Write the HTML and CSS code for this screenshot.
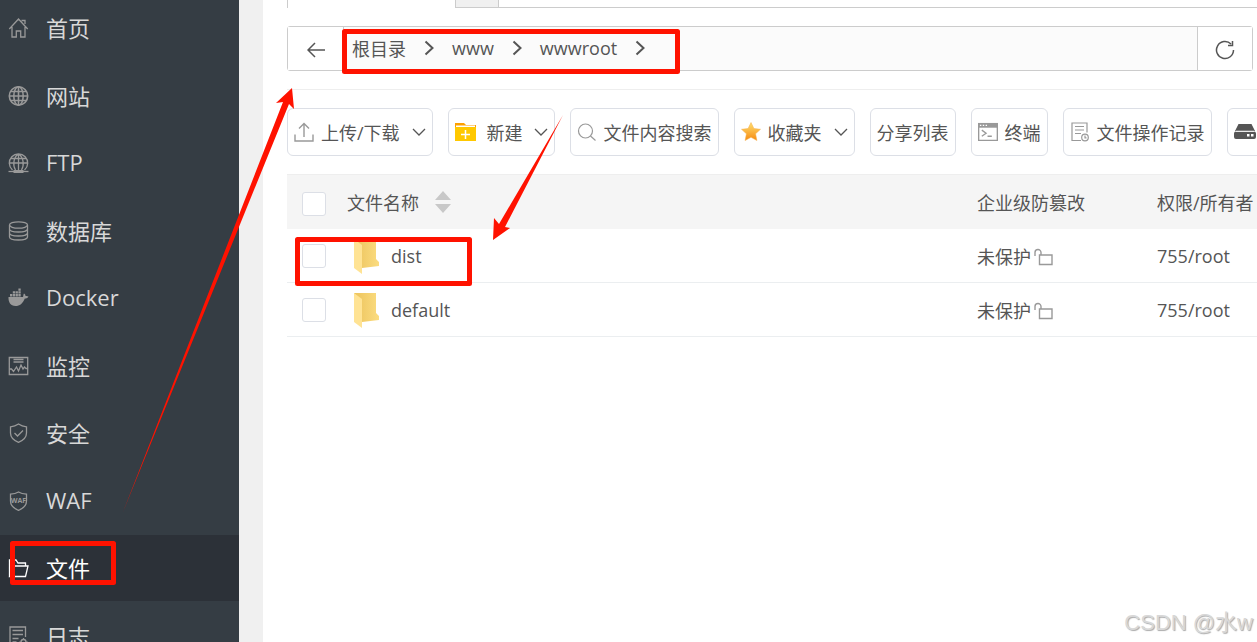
FILE: index.html
```html
<!DOCTYPE html>
<html lang="zh-CN">
  <head>
    <meta charset="utf-8">
    <title>文件</title>
    <link rel="stylesheet" href="styles.css">
  </head>
  <body>
    <div class="layout">
      <nav class="sidebar">
        <ul class="menu">
          <li><a href="#">
            <svg class="icon" viewBox="0 0 20 20"><path d="M.8 11 10 1l9.200 10M3.500 9v10h4.300v-6h4.400v6h4.300V9M13 2.500h3.500V6"/></svg>
            首页</a></li>
          <li><a href="#">
            <svg class="icon bold" viewBox="0 0 20 20"><circle cx="10" cy="10" r="9.200"/><ellipse cx="10" cy="10" rx="4.700" ry="9.200"/><path d="M10 1v18M1 10h18M2 5.500h16M2 14.500h16"/></svg>
            网站</a></li>
          <li><a href="#">
            <svg class="icon" viewBox="0 0 20 20"><path d="M4 17A9.200 9.200 0 1 1 16 17M7 17C4 12 5 4 10 1c5 3 6 11 3 16M10 1v16M1 10h18M2.500 5.500h15"/><path d="M0 18.500h20"/><path d="M5 18.500h10" stroke-width="3"/></svg>
            FTP</a></li>
          <li><a href="#">
            <svg class="icon" viewBox="0 0 20 20"><ellipse cx="10" cy="4" rx="9" ry="3.200"/><path d="M1 4v12c0 4 18 4 18 0V4M1 8c0 4 18 4 18 0M1 12c0 4 18 4 18 0"/></svg>
            数据库</a></li>
          <li><a href="#">
            <svg class="icon solid" viewBox="0 0 20 20"><path d="M0 9h14.500c.5-1 .2-2.500 1-3.500 1 .5 1.500 1.500 1.500 2.500 1-.2 2-.1 3 .5-.7 1.500-2 2-3.700 2-2 5-5 7.500-9.300 7.500C2 18-.3 14 0 9z"/><path d="M1.500 6h2.300v2.500H1.500zM4.300 6h2.300v2.500H4.300zM7.100 6h2.300v2.500H7.100zM9.900 6h2.300v2.500H9.900zM4.300 3.200h2.300v2.300H4.300zM7.100 3.200h2.300v2.300H7.100zM9.900 3.200h2.300v2.300H9.900zM9.900.4h2.300v2.300H9.900z"/></svg>
            Docker</a></li>
          <li><a href="#">
            <svg class="icon" viewBox="0 0 20 20"><path d="M.8 1.500h18.400v17H.8zM5 3.500h10M5 6h10M1 13h2l2 2.500L8 11l2 4 2.500-6 2 4 1.500-2 1.500 1.500H19"/></svg>
            监控</a></li>
          <li><a href="#">
            <svg class="icon" viewBox="0 0 20 20"><path d="M10 1c2.500 1.700 5 2.500 8 2.800V10c0 4.500-3.500 7.500-8 9.300C5.500 17.500 2 14.500 2 10V3.800C5 3.500 7.500 2.700 10 1zM6 10l3 3 5.500-5.500"/></svg>
            安全</a></li>
          <li><a href="#">
            <svg class="icon" viewBox="0 0 20 20"><path d="M10 1c2.500 1.500 5 2 8 2.200V10c0 4.500-3.500 7.500-8 9.300C5.500 17.500 2 14.500 2 10V3.200C5 3 7.500 2.500 10 1z"/><text class="waf" x="10" y="12" text-anchor="middle">WAF</text></svg>
            WAF</a></li>
          <li class="active"><a href="#">
            <svg class="icon" viewBox="0 0 20 20"><path d="M1 18.500V2h6.500l2 3H17v3M1 18.500 4.500 8h15l-2.500 10.500z"/></svg>
            文件</a></li>
          <li><a href="#">
            <svg class="icon" viewBox="0 0 20 20"><path d="M11 19H1.500V1H17v10M4 4.500h10.500M4 8.500h10.500M4 12.500h6M4 16h4"/><circle cx="15" cy="16" r="2.500"/><path d="M15 12v1M15 19v1M11 16h1M18 16h1"/></svg>
            日志</a></li>
        </ul>
      </nav>

      <main class="main">
        <div class="tabs">
          <div class="tab-current"></div>
          <div class="tab-add"></div>
        </div>

        <div class="address">
          <button class="back" type="button" aria-label="后退">
            <svg width="18" height="16" viewBox="0 0 18 16"><path d="M8 1 1 8l7 7M1 8h17"/></svg>
          </button>
          <div class="crumbs">
            <a href="#">根目录</a>
            <svg class="sep" viewBox="0 0 10 16"><path d="m1.500 1.500 7 6.500-7 6.500"/></svg>
            <a href="#">www</a>
            <svg class="sep" viewBox="0 0 10 16"><path d="m1.500 1.500 7 6.500-7 6.500"/></svg>
            <a href="#">wwwroot</a>
            <svg class="sep" viewBox="0 0 10 16"><path d="m1.500 1.500 7 6.500-7 6.500"/></svg>
          </div>
          <button class="refresh" type="button" aria-label="刷新">
            <svg width="20" height="20" viewBox="0 0 20 20"><path d="M18.500 10A8.500 8.500 0 1 1 16 4M17.500 1v4.500H13"/></svg>
          </button>
        </div>

        <div class="toolbar">
          <button class="btn btn-menu" type="button">
            <svg class="tool" viewBox="0 0 20 20"><path d="M1 12.500V19h18v-6.500M10 15V1.500M5 6.500l5-5 5 5"/></svg>
            上传/下载
            <svg class="caret" viewBox="0 0 14 8"><path d="m1 1 6 6 6-6"/></svg>
          </button>
          <button class="btn btn-new" type="button">
            <svg width="21" height="20" viewBox="0 0 21 20"><path fill="#fda000" d="M0 1h9l2 2h10v3H0z"/><path fill="#ffc800" d="M0 5h21v14H0z"/><path stroke="#fff" stroke-width="1.500" d="M1 4.200h19M10.500 8v9M6 12.500h9"/></svg>
            新建
            <svg class="caret" viewBox="0 0 14 8"><path d="m1 1 6 6 6-6"/></svg>
          </button>
          <button class="btn" type="button">
            <svg class="tool thin" viewBox="0 0 20 20"><circle cx="8.500" cy="9" r="7"/><path d="m13.500 14 5 4.500"/></svg>
            文件内容搜索
          </button>
          <button class="btn btn-menu" type="button">
            <svg width="20" height="20" viewBox="0 0 20 20">
              <defs><linearGradient id="star" x2="0" y2="1"><stop offset="0" stop-color="#ffdf70"/><stop offset="1" stop-color="#f68a10"/></linearGradient></defs>
              <path fill="url(#star)" stroke="#f5b04c" stroke-width=".5" stroke-linejoin="round" d="m10 .5 2.900 6 6.600.8-4.900 4.500 1.300 6.700-5.900-3.200-5.900 3.200 1.300-6.700L.5 7.300l6.600-.8z"/>
            </svg>
            收藏夹
            <svg class="caret" viewBox="0 0 14 8"><path d="m1 1 6 6 6-6"/></svg>
          </button>
          <button class="btn" type="button">分享列表</button>
          <button class="btn" type="button">
            <svg class="terminal" viewBox="0 0 21 19"><path d="M.7.7h19.600v17.600H.7zM4 7.500l4.500 3.300L4 14M10 14h4.500"/><path fill="#999" stroke="none" d="M0 0h21v5H0z"/><path stroke="#fff" d="M2 2.500h1.500M5 2.500h1.500M8 2.500h1.500"/></svg>
            终端
          </button>
          <button class="btn" type="button">
            <svg class="tool thin" viewBox="0 0 20 20"><path d="M11 18.500H2V1h15v9.500M5 4.500h9M5 8h9M5 11.500h6"/><circle cx="15" cy="15.500" r="3.300"/><path d="M15 13.500v2.300h1.500"/></svg>
            文件操作记录
          </button>
          <button class="btn btn-disk" type="button" aria-label="磁盘">
            <svg width="22" height="16" viewBox="0 0 22 16"><path fill="#555" d="M4.500 0h13L21 7H1zM2 7.500h18a2 2 0 0 1 2 2V13a2 2 0 0 1-2 2H2a2 2 0 0 1-2-2V9.500a2 2 0 0 1 2-2z"/><path fill="#fff" d="M13 10h2.500v2.500H13zM17 10h2.500v2.500H17zM2 6.800h18v.9H2z"/></svg>
          </button>
        </div>

        <table class="files">
          <thead>
            <tr>
              <th class="col-check"><input type="checkbox" aria-label="全选"></th>
              <th class="col-name"><span class="sortable">文件名称
                <svg width="16" height="22" viewBox="0 0 16 22"><path d="M8 0l8 9H0zM0 13h16l-8 9z"/></svg></span></th>
              <th class="col-guard">企业级防篡改</th>
              <th class="col-owner">权限/所有者</th>
            </tr>
          </thead>
          <tbody>
            <tr>
              <td><input type="checkbox" aria-label="dist"></td>
              <td><a class="file" href="#">
                <svg class="folder" viewBox="0 0 25 36">
                  <defs><linearGradient id="fold" x2="1" y2="0"><stop offset="0" stop-color="#ecc35c"/><stop offset="1" stop-color="#fbdc80"/></linearGradient></defs>
                  <path fill="url(#fold)" d="M0 1h22v20l3 3v4L8 30z"/><path fill="#ffe394" d="m0 1 8 6v29l-8-6z"/>
                </svg>
                dist</a></td>
              <td><span class="guard">未保护
                <svg class="lock" viewBox="0 0 20 18"><path d="M5.500 7h12.500v9.500H5.500zM7 7V4.500a3 3 0 0 0-6 0V8"/></svg></span></td>
              <td>755/root</td>
            </tr>
            <tr>
              <td><input type="checkbox" aria-label="default"></td>
              <td><a class="file" href="#">
                <svg class="folder" viewBox="0 0 25 36"><path fill="url(#fold)" d="M0 1h22v20l3 3v4L8 30z"/><path fill="#ffe394" d="m0 1 8 6v29l-8-6z"/></svg>
                default</a></td>
              <td><span class="guard">未保护
                <svg class="lock" viewBox="0 0 20 18"><path d="M5.500 7h12.500v9.500H5.500zM7 7V4.500a3 3 0 0 0-6 0V8"/></svg></span></td>
              <td>755/root</td>
            </tr>
          </tbody>
        </table>
      </main>
    </div>

    <!-- red boxes and arrows drawn over the panel -->
    <svg class="marks" width="1257" height="642" viewBox="0 0 1257 642">
      <g fill="none" stroke="#ff1200" stroke-width="5" stroke-linejoin="round">
        <path d="M12.500 543.500h101v39h-101z"/>
        <path d="M344.500 31.500h333v40h-333z"/>
        <path d="M297.500 239.500h172v44h-172z"/>
      </g>
      <g fill="#ff1200">
        <path d="M123 512 283 102l-7 1 16-15 2 21-5-5z"/>
        <path d="M563 115 499 224l-5-6-1 22 17-12-5-1z"/>
      </g>
    </svg>
    <div class="watermark">CSDN @水w</div>
  </body>
</html>
```

FILE: styles.css
```css
* {
  box-sizing: border-box;
}

body {
  position: relative;
  height: 100vh;
  margin: 0;
  overflow: hidden;
  font-family: "Open Sans", "Noto Sans CJK SC", sans-serif;
  font-size: 18px;
  font-weight: 400;
  color: #555;
  background: #f0f0f0;
}

a {
  color: inherit;
  text-decoration: none;
}

button {
  font: inherit;
  color: inherit;
}

svg {
  flex: none;
  fill: none;
}

.layout {
  display: flex;
  gap: 24px;
  height: 100%;
}

/* sidebar */
.sidebar {
  flex: 0 0 239px;
  overflow: hidden;
  background: #353d44;
}

.menu {
  margin: -5px 0 0;
  padding: 0;
  list-style: none;
}

.menu li {
  margin-bottom: 1px;
}

.menu li:nth-child(odd) {
  margin-bottom: 2px;
}

.menu a {
  display: flex;
  align-items: center;
  gap: 17px;
  height: 66px;
  padding: 0 0 3px 8px;
  font-size: 22px;
  color: #d8d8d8;
}

.menu .active a {
  color: #fff;
  background: #2c3138;
}

.icon {
  width: 21px;
  height: 20px;
  margin-top: 3px;
  stroke: #999;
  stroke-width: 1.3;
}

.icon.bold {
  stroke-width: 1.6;
}

.icon.solid {
  fill: #999;
  stroke: none;
}

.active .icon {
  stroke: #fff;
}

.waf {
  font-size: 7px;
  font-weight: 700;
  fill: #999;
  stroke: none;
}

/* main */
.main {
  flex: 1;
  min-width: 0;
  padding-left: 24px;
  overflow: hidden;
  background: #fff;
}

.tabs {
  display: flex;
  height: 8px;
  border-bottom: 1px solid #ccc;
}

.tab-current {
  width: 168px;
  height: 8px;
  border-left: 1px solid #ccc;
  background: #fff;
}

.tab-add {
  width: 44px;
  border: solid #ccc;
  border-width: 0 1px;
  background: #f0f0f0;
}

.address {
  display: flex;
  height: 45px;
  margin: 18px 4px 18px 0;
  border: 1px solid #ccc;
  border-radius: 3px;
}

.address button {
  display: flex;
  align-items: center;
  justify-content: center;
  width: 55px;
  padding: 2px 0 0;
  border: 0;
  background: #fff;
}

.address svg {
  stroke: #555;
  stroke-width: 1.5;
}

.address .refresh {
  border-left: 1px solid #ccc;
}

.crumbs {
  display: flex;
  flex: 1;
  align-items: center;
  padding: 0 0 2px 8px;
  border-left: 1px solid #ccc;
  background: #fbfbfb;
}

.crumbs .sep {
  width: 46px;
  height: 16px;
  stroke-width: 2;
}

/* toolbar */
.toolbar {
  display: flex;
  gap: 15px;
  padding: 18px 0;
  border-top: 1px solid #eee;
}

.btn {
  display: flex;
  flex: none;
  align-items: center;
  gap: 7px;
  height: 48px;
  padding: 0 6px;
  border: 1px solid #dcdfe6;
  border-radius: 6px;
  white-space: nowrap;
  background: #fff;
}

.btn-new {
  gap: 11px;
}

.btn-menu .caret {
  margin-left: 5px;
}

.btn-disk {
  width: 120px;
}

.tool,
.terminal {
  width: 20px;
  height: 20px;
  stroke: #999;
  stroke-width: 1.4;
}

.tool.thin {
  stroke-width: 1.2;
}

.caret {
  width: 14px;
  height: 8px;
  stroke: #555;
  stroke-width: 1.3;
}

/* file table */
.files {
  width: 100%;
  min-width: 970px;
  table-layout: fixed;
  border-spacing: 0;
}

.files th,
.files td {
  height: 54px;
  padding: 0;
  font-weight: 400;
  text-align: left;
  white-space: nowrap;
  border-bottom: 1px solid #ebeef0;
}

.files th {
  height: 55px;
  border-top: 1px solid #eee;
  border-bottom: 0;
  background: #f5f5f5;
}

.col-check {
  width: 60px;
}

.col-guard {
  width: 180px;
}

.col-owner {
  width: 100px;
}

.files input {
  display: block;
  width: 24px;
  height: 24px;
  margin: 0 0 0 15px;
  appearance: none;
  border: 1px solid #dcdfe6;
  border-radius: 3px;
  background: #fff;
}

.files th input {
  margin-top: 3px;
}

.sortable {
  display: flex;
  align-items: center;
  gap: 16px;
}

.sortable svg {
  fill: #c8c8c8;
}

.file {
  display: flex;
  align-items: center;
  gap: 12px;
  padding-left: 7px;
}

.folder {
  width: 25px;
  height: 36px;
}

.guard {
  display: flex;
  align-items: center;
  gap: 3px;
}

.lock {
  width: 20px;
  height: 18px;
  margin-top: 3px;
  stroke: #999;
  stroke-width: 1.4;
}

.marks {
  position: absolute;
  top: 0;
  left: 0;
  pointer-events: none;
}

.watermark {
  position: absolute;
  right: 4px;
  bottom: 6px;
  font-family: "Liberation Sans", "Noto Sans CJK SC", sans-serif;
  font-size: 22px;
  color: #d8d8d8;
  text-shadow: 1px 1px 1px #aaa;
}
```
